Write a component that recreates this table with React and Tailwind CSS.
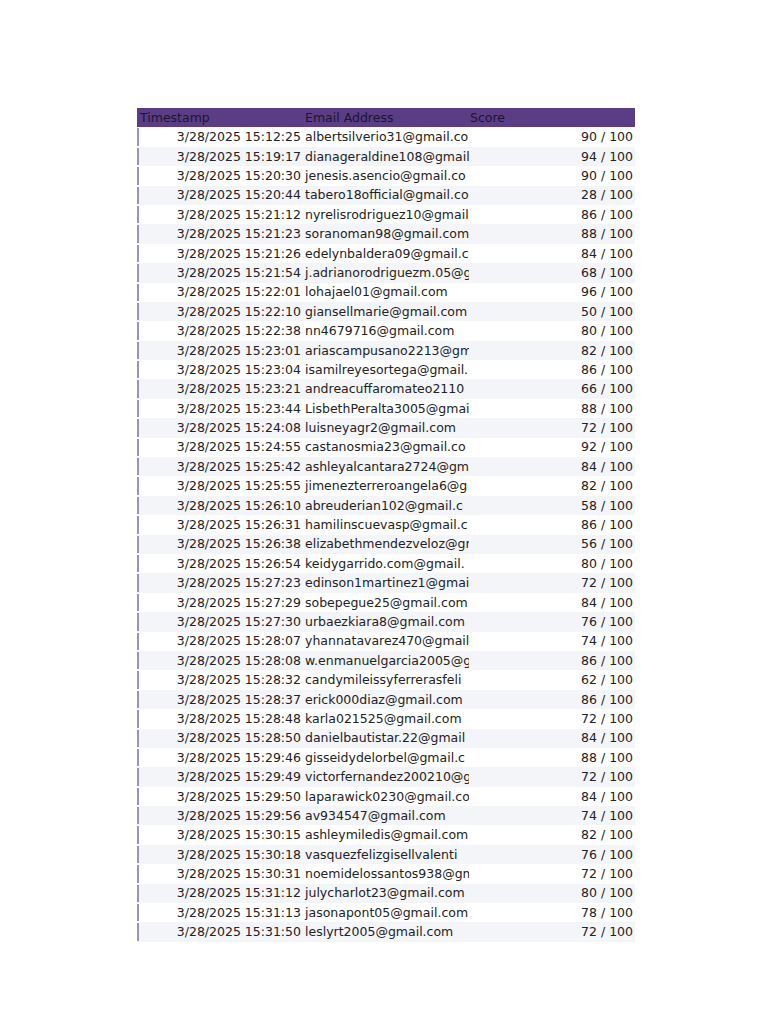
import React from "react";

// emails are shown as far as the sheet column lets them
const rows = [
  ["3/28/2025 15:12:25", "albertsilverio31@gmail.co", "90 / 100"],
  ["3/28/2025 15:19:17", "dianageraldine108@gmail", "94 / 100"],
  ["3/28/2025 15:20:30", "jenesis.asencio@gmail.co", "90 / 100"],
  ["3/28/2025 15:20:44", "tabero18official@gmail.co", "28 / 100"],
  ["3/28/2025 15:21:12", "nyrelisrodriguez10@gmail", "86 / 100"],
  ["3/28/2025 15:21:23", "soranoman98@gmail.com", "88 / 100"],
  ["3/28/2025 15:21:26", "edelynbaldera09@gmail.c", "84 / 100"],
  ["3/28/2025 15:21:54", "j.adrianorodriguezm.05@g", "68 / 100"],
  ["3/28/2025 15:22:01", "lohajael01@gmail.com", "96 / 100"],
  ["3/28/2025 15:22:10", "giansellmarie@gmail.com", "50 / 100"],
  ["3/28/2025 15:22:38", "nn4679716@gmail.com", "80 / 100"],
  ["3/28/2025 15:23:01", "ariascampusano2213@gm", "82 / 100"],
  ["3/28/2025 15:23:04", "isamilreyesortega@gmail.", "86 / 100"],
  ["3/28/2025 15:23:21", "andreacuffaromateo2110", "66 / 100"],
  ["3/28/2025 15:23:44", "LisbethPeralta3005@gmai", "88 / 100"],
  ["3/28/2025 15:24:08", "luisneyagr2@gmail.com", "72 / 100"],
  ["3/28/2025 15:24:55", "castanosmia23@gmail.co", "92 / 100"],
  ["3/28/2025 15:25:42", "ashleyalcantara2724@gm", "84 / 100"],
  ["3/28/2025 15:25:55", "jimenezterreroangela6@g", "82 / 100"],
  ["3/28/2025 15:26:10", "abreuderian102@gmail.c", "58 / 100"],
  ["3/28/2025 15:26:31", "hamilinscuevasp@gmail.c", "86 / 100"],
  ["3/28/2025 15:26:38", "elizabethmendezveloz@gm", "56 / 100"],
  ["3/28/2025 15:26:54", "keidygarrido.com@gmail.", "80 / 100"],
  ["3/28/2025 15:27:23", "edinson1martinez1@gmai", "72 / 100"],
  ["3/28/2025 15:27:29", "sobepegue25@gmail.com", "84 / 100"],
  ["3/28/2025 15:27:30", "urbaezkiara8@gmail.com", "76 / 100"],
  ["3/28/2025 15:28:07", "yhannatavarez470@gmail", "74 / 100"],
  ["3/28/2025 15:28:08", "w.enmanuelgarcia2005@g", "86 / 100"],
  ["3/28/2025 15:28:32", "candymileissyferrerasfeli", "62 / 100"],
  ["3/28/2025 15:28:37", "erick000diaz@gmail.com", "86 / 100"],
  ["3/28/2025 15:28:48", "karla021525@gmail.com", "72 / 100"],
  ["3/28/2025 15:28:50", "danielbautistar.22@gmail", "84 / 100"],
  ["3/28/2025 15:29:46", "gisseidydelorbel@gmail.c", "88 / 100"],
  ["3/28/2025 15:29:49", "victorfernandez200210@g", "72 / 100"],
  ["3/28/2025 15:29:50", "laparawick0230@gmail.co", "84 / 100"],
  ["3/28/2025 15:29:56", "av934547@gmail.com", "74 / 100"],
  ["3/28/2025 15:30:15", "ashleymiledis@gmail.com", "82 / 100"],
  ["3/28/2025 15:30:18", "vasquezfelizgisellvalenti", "76 / 100"],
  ["3/28/2025 15:30:31", "noemidelossantos938@gm", "72 / 100"],
  ["3/28/2025 15:31:12", "julycharlot23@gmail.com", "80 / 100"],
  ["3/28/2025 15:31:13", "jasonapont05@gmail.com", "78 / 100"],
  ["3/28/2025 15:31:50", "leslyrt2005@gmail.com", "72 / 100"],
];

export default function App() {
  return (
    <div className="min-h-[1024px] w-[768px] bg-white pt-[108px] pl-[137px] font-['DejaVu_Sans',sans-serif] text-[12.5px] text-[#222]">
      <div className="w-[498px]">
        {/* header */}
        <div className="flex h-[19.4px] items-center bg-[#5b3d86] pt-px text-[#1c1530]">
          <div className="w-[166px] pl-[3px]">Timestamp</div>
          <div className="w-[166px] pl-[2px]">Email Address</div>
          <div className="w-[166px] pl-[1px]">Score</div>
        </div>

        {rows.map(([ts, email, score], i) => (
          <div
            key={i}
            className={`flex h-[19.4px] items-center ${i % 2 === 1 ? "bg-[#f4f5f9]" : "bg-white"}`}
          >
            <div className="my-[1px] w-[2px] self-stretch bg-[#9c92c2]" />
            <div className="w-[164px] pt-px pr-[2px] text-right whitespace-nowrap">{ts}</div>
            <div className="w-[166px] overflow-hidden whitespace-nowrap pt-px pl-[2px]">{email}</div>
            <div className="w-[166px] pt-px pr-[2px] text-right whitespace-nowrap">{score}</div>
          </div>
        ))}
      </div>
    </div>
  );
}
